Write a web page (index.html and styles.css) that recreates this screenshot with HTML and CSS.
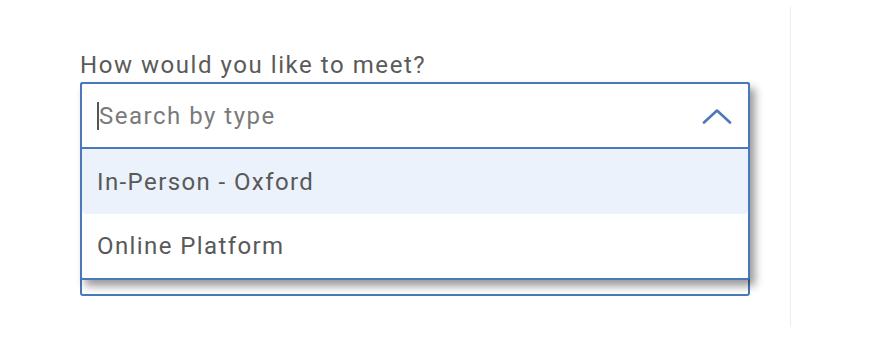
FILE: index.html
```html
<!DOCTYPE html>
<html lang="en">

<head>
    <meta charset="UTF-8" />
    <meta name="viewport" content="width=device-width, initial-scale=1.0" />
    <title>How would you like to meet?</title>
    <link rel="stylesheet" href="styles.css">
</head>

<body>
    <div class="page">
        <!-- Form column -->
        <div class="panel">
            <div class="field">
                <label class="field-label" for="meetType">How would you like to meet?</label>
                <div class="combo">
                    <!-- Open dropdown -->
                    <div class="dropdown">
                        <div class="search-row">
                            <span class="caret"></span>
                            <input class="search-input" id="meetType" type="text" placeholder="Search by type" />
                            <svg class="chevron" width="30" height="16" viewBox="0 0 30 16">
                                <path d="M2 14.5 L15 2.5 L28 14.5" fill="none" stroke="#4b77bb" stroke-width="2.6" stroke-linecap="round" stroke-linejoin="round" />
                            </svg>
                        </div>
                        <ul class="options">
                            <li class="option active">In-Person - Oxford</li>
                            <li class="option">Online Platform</li>
                        </ul>
                    </div>
                </div>
            </div>
        </div>
    </div>
</body>

</html>
```

FILE: styles.css
```css
html,
body {
    margin: 0;
    padding: 0;
    background: #fff;
    font-family: Roboto, 'Liberation Sans', sans-serif;
}

.page {
    display: flex;
    height: 350px;
}

/* Sol sütun */
.panel {
    width: 791px;
    height: 320px;
    margin-top: 7px;
    padding: 42px 0 0 80px;
    border-right: 1px solid #ededed;
    box-sizing: border-box;
}

.field {
    width: 670px;
}

.field-label {
    display: block;
    font-size: 24px;
    line-height: 32px;
    letter-spacing: 1.55px;
    color: #5a5a5a;
    margin-bottom: 1px;
}

.combo {
    position: relative;
    height: 214px;
    border: 2px solid #4b77bb;
    border-radius: 3px;
    box-sizing: border-box;
}

.dropdown {
    position: absolute;
    top: -2px;
    left: -2px;
    right: -2px;
    background: #fff;
    border: 2px solid #4b77bb;
    border-radius: 3px;
    box-shadow: 5px 6px 8px rgba(0, 0, 0, 0.4);
}

.search-row {
    height: 63px;
    display: flex;
    align-items: center;
    padding: 0 16px 0 15px;
    border-bottom: 2px solid #4b77bb;
}

.caret {
    width: 2px;
    height: 28px;
    background: #555;
}

.search-input {
    flex: 1;
    border: none;
    outline: none;
    padding: 0;
    margin-left: 0;
    font-family: inherit;
    font-size: 24px;
    letter-spacing: 1.5px;
    color: #333;
    background: transparent;
}

.search-input::placeholder {
    color: #7a7a7a;
}

.chevron {
    display: block;
}

.options {
    list-style: none;
    margin: 0;
    padding: 0;
}

.option {
    height: 65px;
    display: flex;
    align-items: center;
    padding-left: 15px;
    font-size: 24px;
    letter-spacing: 1.4px;
    color: #595959;
    cursor: pointer;
}

.option.active {
    background: #ebf2fc;
    border-radius: 0 0 4px 4px;
}

.option + .option {
    height: 64px;
}
```
